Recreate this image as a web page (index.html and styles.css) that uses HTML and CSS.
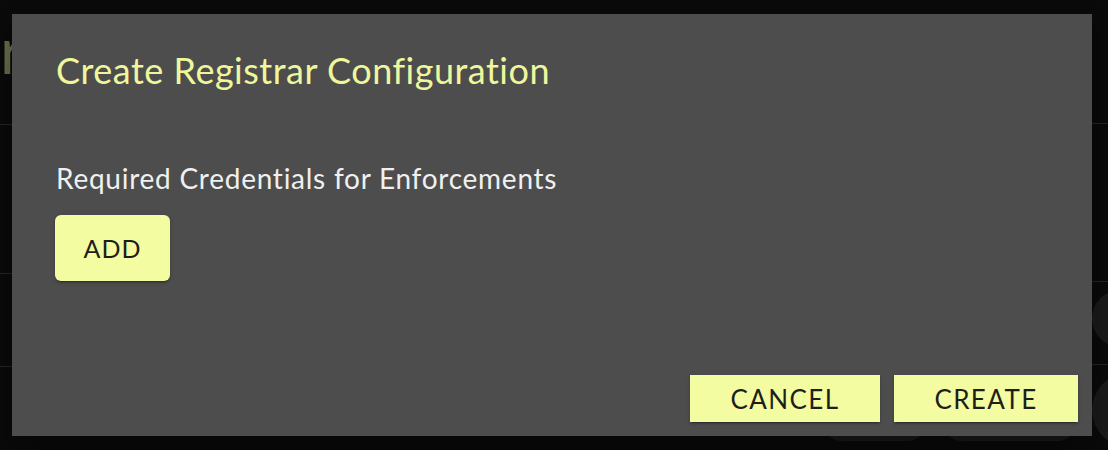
FILE: index.html
```html
<!DOCTYPE html>
<html lang="en">
<head>
<meta charset="utf-8">
<title>Create Registrar Configuration</title>
<link rel="stylesheet" href="styles.css">
</head>
<body>
<div class="page">
  <div class="col col-left">
    <div class="row row-head">
      <span class="page-title">r</span>
    </div>
    <div class="row row-a"></div>
    <div class="row row-b"></div>
    <div class="row row-c"></div>
  </div>
  <div class="col col-right">
    <div class="row row-head"></div>
    <div class="row row-d"></div>
    <div class="row row-e"><span class="circle"></span></div>
    <div class="row row-f">
      <span class="pill pill-1"></span>
      <span class="pill pill-2"></span>
      <span class="circle circle-low"></span>
    </div>
  </div>
</div>

<div class="dialog" role="dialog">
  <div class="dialog-body">
    <h2 class="dialog-title">Create Registrar Configuration</h2>
    <p class="section-label">Required Credentials for Enforcements</p>
    <button class="btn btn-add">ADD</button>
  </div>
  <div class="dialog-actions">
    <button class="btn btn-action">CANCEL</button>
    <button class="btn btn-action">CREATE</button>
  </div>
</div>
</body>
</html>
```
FILE: styles.css
```css
html, body {
  margin: 0;
  padding: 0;
}
body {
  width: 1108px;
  height: 450px;
  overflow: hidden;
  background: #0b0b0b;
  font-family: "Lato", "Open Sans", sans-serif;
  position: relative;
}

/* background page, dimmed */
.page {
  display: flex;
  height: 450px;
}
.col {
  display: flex;
  flex-direction: column;
}
.col-left {
  width: 560px;
}
.col-right {
  flex: 1;
}
.row {
  border-bottom: 1px solid #262626;
  box-sizing: border-box;
  display: flex;
  align-items: center;
}
.row-head { height: 125px; align-items: flex-start; }
.row-a { height: 149px; }
.row-b { height: 93px; }
.row-c { flex: 1; border-bottom: 0; }
.row-d { height: 159px; }
.row-e { height: 83px; justify-content: flex-end; align-items: flex-start; }
.row-f {
  flex: 1;
  border-bottom: 0;
  align-items: flex-end;
  justify-content: flex-end;
  padding-bottom: 9px;
  gap: 15px;
}
.page-title {
  white-space: nowrap;
  font-size: 64px;
  color: #6b6d4b;
  line-height: 1;
  margin-top: 18px;
}
.circle {
  width: 57px;
  height: 57px;
  border-radius: 50%;
  background: #1c1c1c;
  margin-right: -41px;
  margin-top: 8px;
}
.circle-low {
  width: 74px;
  height: 74px;
  margin-right: -58px;
  margin-bottom: -6px;
}
.pill {
  height: 50px;
  border-radius: 20px;
  background: #1c1c1c;
}
.pill-1 { width: 105px; }
.pill-2 { width: 135px; }

/* dialog overlay */
.dialog {
  position: absolute;
  left: 12px;
  top: 14px;
  width: 1080px;
  height: 422px;
  background: #4d4d4d;
  box-shadow: 0 11px 15px -7px rgba(0,0,0,0.2), 0 24px 38px 3px rgba(0,0,0,0.14), 0 9px 46px 8px rgba(0,0,0,0.12);
  display: flex;
  flex-direction: column;
  box-sizing: border-box;
}
.dialog-body {
  flex: 1;
  padding: 35px 44px 0 43px;
  display: flex;
  flex-direction: column;
  align-items: flex-start;
}
.dialog-title {
  margin: 0 0 0 1px;
  font-size: 36px;
  font-weight: 400;
  letter-spacing: 0.5px;
  line-height: 1.2;
  color: #eff79c;
}
.section-label {
  margin: 70px 0 0 1px;
  font-size: 28px;
  letter-spacing: 0.75px;
  line-height: 1.2;
  color: #f0f0f0;
}
.btn {
  font-family: "Lato", "Open Sans", sans-serif;
  border: 0;
  background: #f3fca1;
  color: #1f1f1a;
  padding: 0;
  cursor: pointer;
}
.btn-add {
  margin-top: 19px;
  width: 115px;
  height: 66px;
  font-size: 25px;
  letter-spacing: 1px;
  border-radius: 6px;
  box-shadow: 0 3px 1px -2px rgba(0,0,0,0.2), 0 2px 2px 0 rgba(0,0,0,0.14), 0 1px 5px 0 rgba(0,0,0,0.12);
}
.dialog-actions {
  display: flex;
  justify-content: flex-end;
  gap: 14px;
  padding: 0 14px 14px 0;
}
.btn-action {
  height: 47px;
  width: 190px;
  font-size: 26px;
  letter-spacing: 1.4px;
  box-shadow: 0 3px 1px -2px rgba(0,0,0,0.2), 0 2px 2px 0 rgba(0,0,0,0.14), 0 1px 5px 0 rgba(0,0,0,0.12);
}
.btn-action + .btn-action {
  width: 184px;
}
```
